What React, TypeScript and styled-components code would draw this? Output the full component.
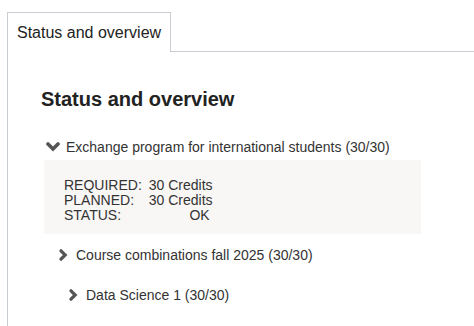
import { Fragment } from "react";
import styled, { createGlobalStyle } from "styled-components";

const GlobalStyle = createGlobalStyle`
  html, body {
    margin: 0;
    padding: 0;
    background: #ffffff;
    font-family: "Liberation Sans", Arial, sans-serif;
    color: #333333;
    overflow: hidden;
  }
`;

// 탭 영역
const Page = styled.div`
  padding: 12px 0 0 7px;
  min-height: 314px;
  display: flex;
  flex-direction: column;
`;

const TabBar = styled.div`
  display: flex;
  border-bottom: 1px solid #c8cdd3;
`;

const Tab = styled.div`
  border: 1px solid #c8cdd3;
  border-bottom: none;
  background: #ffffff;
  margin-bottom: -1px;
  padding: 0 9px;
  height: 39px;
  display: flex;
  align-items: center;
  font-size: 16px;
  color: #222222;
`;

const Panel = styled.div`
  flex: 1;
  border-left: 1px solid #c8cdd3;
  padding: 35px 0 0 33px;
`;

const Heading = styled.h2`
  margin: 0 0 26px 0;
  font-size: 20px;
  line-height: 24px;
  font-weight: bold;
  color: #222222;
`;

// 트리 행
const Row = styled.div<{ $indent: number; $gap: number }>`
  display: flex;
  align-items: center;
  margin: ${({ $gap }) => $gap}px 0 0 ${({ $indent }) => $indent}px;
  font-size: 14px;
  line-height: 20px;
  color: #333333;
`;

const IconSlot = styled.span<{ $w: number; $space: number }>`
  display: inline-flex;
  align-items: center;
  justify-content: center;
  width: ${({ $w }) => $w}px;
  margin-right: ${({ $space }) => $space}px;
`;

const CreditBox = styled.div`
  margin: 3px 0 0 3px;
  width: 377px;
  box-sizing: border-box;
  padding: 18px 20px 11px 20px;
  background: #f8f7f5;
  display: grid;
  grid-template-columns: max-content max-content;
  column-gap: 7px;
  font-size: 14px;
  line-height: 15px;
  color: #333333;
`;

const Label = styled.span``;

const Value = styled.span<{ $trail?: number }>`
  text-align: right;
  padding-right: ${({ $trail }) => $trail ?? 0}px;
`;

const ChevronDown = () => (
  <svg width="14" height="10" viewBox="0 0 14 10">
    <polyline points="2,2 7,7 12,2" fill="none" stroke="#555555" strokeWidth="3.6" strokeLinecap="round" strokeLinejoin="miter" />
  </svg>
);

const ChevronRight = () => (
  <svg width="9" height="12" viewBox="0 0 9 12">
    <polyline points="2,1.8 6.2,6 2,10.2" fill="none" stroke="#555555" strokeWidth="3.2" strokeLinecap="round" strokeLinejoin="miter" />
  </svg>
);

const credits = [
  { label: "REQUIRED:", value: "30 Credits" },
  { label: "PLANNED:", value: "30 Credits" },
  { label: "STATUS:", value: "OK", trail: 3 },
];

const App = () => {
  return (
    <>
      <GlobalStyle />
      <Page>
        <TabBar>
          <Tab>Status and overview</Tab>
        </TabBar>
        <Panel>
          <Heading>Status and overview</Heading>

          <Row $indent={5} $gap={0}>
            <IconSlot $w={14} $space={6}>
              <ChevronDown />
            </IconSlot>
            Exchange program for international students (30/30)
          </Row>

          <CreditBox>
            {credits.map((c) => (
              <Fragment key={c.label}>
                <Label>{c.label}</Label>
                <Value $trail={c.trail}>{c.value}</Value>
              </Fragment>
            ))}
          </CreditBox>

          <Row $indent={18} $gap={11}>
            <IconSlot $w={9} $space={8}>
              <ChevronRight />
            </IconSlot>
            Course combinations fall 2025 (30/30)
          </Row>

          <Row $indent={28} $gap={20}>
            <IconSlot $w={9} $space={8}>
              <ChevronRight />
            </IconSlot>
            Data Science 1 (30/30)
          </Row>
        </Panel>
      </Page>
    </>
  );
};

export default App;
